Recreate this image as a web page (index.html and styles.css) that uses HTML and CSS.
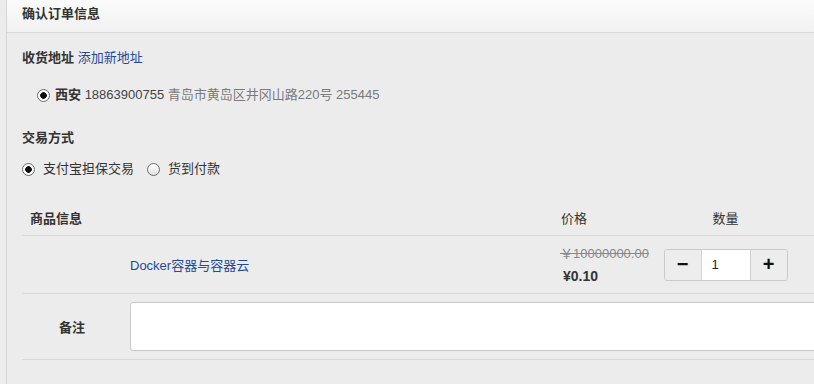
FILE: index.html
```html
<!DOCTYPE html>
<html>

<head>
	<title>确认订单信息</title>
	<meta charset="UTF-8">
	<link rel="stylesheet" href="styles.css">
</head>

<body>
	<div class="panel">
		<div class="panel-head">确认订单信息</div>
		<div class="panel-body">
			<div class="section-title">收货地址 <a class="link" href="#">添加新地址</a></div>
			<label class="address">
				<input type="radio" class="radio" name="addr" checked>
				<span><b>西安</b> <span class="phone">18863900755</span> <span class="muted">青岛市黄岛区井冈山路220号 255445</span></span>
			</label>

			<div class="section-title pay-title">交易方式</div>
			<div class="pay">
				<label><input type="radio" class="radio" name="pay" checked> 支付宝担保交易</label>
				<label><input type="radio" class="radio" name="pay"> 货到付款</label>
			</div>

			<div class="goods">
				<div class="row head">
					<div class="cell span2 strong">商品信息</div>
					<div class="cell">价格</div>
					<div class="cell center">数量</div>
					<div class="cell"></div>
				</div>
				<div class="row item">
					<div class="cell"></div>
					<div class="cell"><a class="link" href="#">Docker容器与容器云</a></div>
					<div class="cell price">
						<del>￥10000000.00</del>
						<strong>¥0.10</strong>
					</div>
					<div class="cell center">
						<div class="qty">
							<button class="qty-btn">&minus;</button>
							<input class="qty-input" type="text" value="1">
							<button class="qty-btn">+</button>
						</div>
					</div>
					<div class="cell"></div>
				</div>
				<div class="row remark">
					<div class="cell center strong">备注</div>
					<div class="cell span-rest"><textarea class="remark-box"></textarea></div>
				</div>
			</div>
		</div>
	</div>
</body>

</html>
```

FILE: styles.css
```css
body {
	margin: 0;
	overflow: hidden;
	background-color: #ececec;
	color: #333;
	font-family: "Liberation Sans", "Noto Sans CJK SC", sans-serif;
	font-size: 13px;
}

.panel {
	margin-left: 6px;
	width: 1000px;
	min-height: 384px;
	border-left: 1px solid #d6d6d6;
}

.panel-head {
	height: 32px;
	line-height: 28px;
	padding-left: 15px;
	font-weight: bold;
	background: linear-gradient(#fbfbfb, #f1f1f1);
	border-bottom: 1px solid #d9d9d9;
}

.panel-body {
	padding: 15px 0 0 15px;
}

.section-title {
	line-height: 20px;
	font-weight: bold;
}

.link {
	color: #24499a;
	font-weight: normal;
	text-decoration: none;
}

.address {
	display: flex;
	align-items: center;
	margin-top: 17px;
	padding-left: 15px;
	line-height: 20px;
}

.phone {
	color: #444;
}

.muted {
	color: #7a7a7a;
}

.radio {
	appearance: none;
	-webkit-appearance: none;
	width: 13px;
	height: 13px;
	margin: 0 5px 0 0;
	border: 1px solid #6b6b6b;
	border-radius: 50%;
	background: linear-gradient(#ffffff, #e2e2e2);
}

.radio:checked {
	background: radial-gradient(circle, #111 0 3px, #fafafa 3.6px);
}

.pay-title {
	margin-top: 23px;
}

.pay {
	display: flex;
	gap: 13px;
	margin-top: 11px;
	line-height: 20px;
}

.pay label {
	display: flex;
	align-items: center;
	gap: 3px;
}

.goods {
	margin-top: 20px;
}

.row {
	display: grid;
	grid-template-columns: 100px 431px 98px 149px 1fr;
	align-items: center;
	border-bottom: 1px solid #d8d8d8;
}

.row.head {
	height: 36px;
}

.row.item {
	height: 57px;
}

.cell {
	padding: 0 8px;
}

.span2 {
	grid-column: span 2;
}

.span-rest {
	grid-column: 2 / -1;
	padding: 8px;
}

.center {
	text-align: center;
}

.strong {
	font-weight: bold;
}

.price {
	display: flex;
	flex-direction: column;
	gap: 6px;
}

.price del {
	color: #888;
	line-height: 16px;
	margin-left: -1px;
}

.price strong {
	font-size: 14px;
	line-height: 16px;
	padding-left: 2px;
}

.qty {
	display: inline-flex;
	height: 30px;
	border: 1px solid #cacaca;
	border-radius: 3px;
	overflow: hidden;
	vertical-align: middle;
}

.qty-btn {
	width: 36px;
	border: 0;
	padding: 0;
	background: #ededed;
	color: #111;
	font-family: "Liberation Sans", sans-serif;
	font-size: 20px;
	font-weight: bold;
}

.qty-input {
	width: 50px;
	border: 0;
	border-left: 1px solid #d2d2d2;
	border-right: 1px solid #d2d2d2;
	padding: 0 0 0 10px;
	box-sizing: border-box;
	font-family: "Liberation Sans", sans-serif;
	font-size: 13px;
	color: #222;
	outline: none;
}

.remark-box {
	display: block;
	width: 100%;
	height: 49px;
	box-sizing: border-box;
	border: 1px solid #c9c9c9;
	border-radius: 3px;
	background: #fff;
	resize: none;
}
```
